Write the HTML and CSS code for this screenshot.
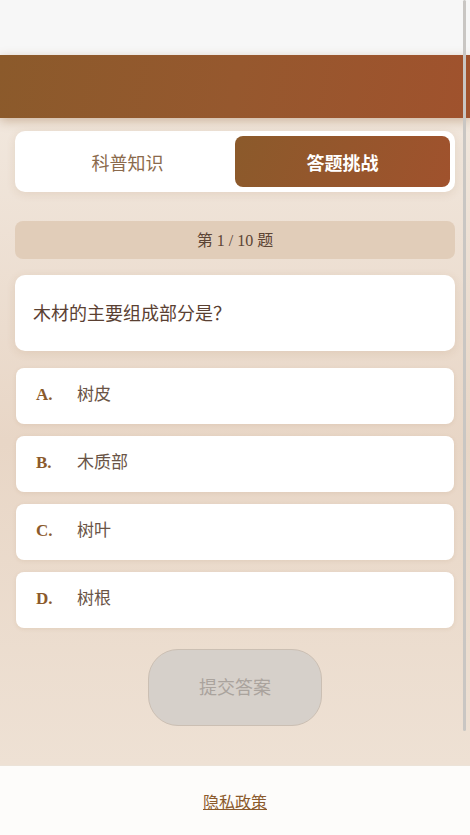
FILE: index.html
```html
<!DOCTYPE html>
<html lang="zh">
<head>
<meta charset="utf-8">
<title>答题挑战</title>
<link rel="stylesheet" href="styles.css">
</head>
<body>
<div class="app">
  <div class="topbar"></div>
  <header class="header"></header>
  <main class="main">
    <nav class="tabs">
      <button class="tab">科普知识</button>
      <button class="tab active">答题挑战</button>
    </nav>
    <div class="counter">第 1 / 10 题</div>
    <section class="question">木材的主要组成部分是？</section>
    <ul class="options">
      <li class="option"><span class="letter">A.</span><span class="text">树皮</span></li>
      <li class="option"><span class="letter">B.</span><span class="text">木质部</span></li>
      <li class="option"><span class="letter">C.</span><span class="text">树叶</span></li>
      <li class="option"><span class="letter">D.</span><span class="text">树根</span></li>
    </ul>
    <div class="submit-wrap"><button class="submit" disabled>提交答案</button></div>
  </main>
  <footer class="footer"><a href="#" class="privacy">隐私政策</a></footer>
  <div class="scroll-thumb"></div>
</div>
</body>
</html>
```
FILE: styles.css
```css
* { box-sizing: border-box; }
html, body { margin: 0; padding: 0; }
body {
  font-family: "Liberation Serif", "Noto Sans CJK SC", serif;
  background: #f7f7f7;
}
.app {
  position: relative;
  width: 470px;
  height: 835px;
  display: flex;
  flex-direction: column;
  overflow: hidden;
}
.topbar {
  height: 55px;
  background: #f7f7f7;
  flex: none;
}
.header {
  height: 63px;
  flex: none;
  background: linear-gradient(100deg, #8b5a2b 0%, #96582e 50%, #a0522d 100%);
  box-shadow: 0 3px 10px rgba(139, 90, 43, 0.35);
  position: relative;
  z-index: 1;
}
.main {
  flex: 1;
  padding: 13px 15px 0 15px;
  background: linear-gradient(180deg, #f1e7dd 0%, #e8d6c6 50%, #eee1d4 100%);
  display: flex;
  flex-direction: column;
}
.tabs {
  display: flex;
  padding: 5px;
  background: #fff;
  border-radius: 10px;
  box-shadow: 0 2px 10px rgba(139, 90, 43, 0.12);
  height: 61px;
}
.tab {
  flex: 1;
  border: none;
  background: transparent;
  font-family: "Liberation Serif", "Noto Sans CJK SC", serif;
  font-size: 18px;
  color: #8b6a4c;
  border-radius: 8px;
  padding: 0;
}
.tab.active {
  background: linear-gradient(110deg, #8b5a2b 0%, #a0522d 100%);
  color: #fff;
  font-weight: bold;
}
.counter {
  margin-top: 29px;
  height: 38px;
  background: #e1cdb9;
  border-radius: 8px;
  display: flex;
  align-items: center;
  justify-content: center;
  font-size: 16px;
  color: #5c4434;
  padding-bottom: 3px;
}
.question {
  margin-top: 16px;
  height: 76px;
  background: #fff;
  border-radius: 10px;
  box-shadow: 0 2px 10px rgba(139, 90, 43, 0.12);
  display: flex;
  align-items: center;
  padding: 0 18px 2px 18px;
  font-size: 18px;
  color: #5a4032;
}
.options {
  list-style: none;
  margin: 17px 1px 0 1px;
  padding: 0;
  display: flex;
  flex-direction: column;
  gap: 12px;
}
.option {
  height: 56px;
  line-height: 54px;
  background: #fff;
  border-radius: 8px;
  box-shadow: 0 1px 4px rgba(139, 90, 43, 0.1);
  padding-left: 20px;
  white-space: nowrap;
}
.letter {
  display: inline-block;
  width: 41px;
  font-weight: bold;
  font-size: 17px;
  color: #8b5a2b;
}
.text {
  font-size: 17px;
  color: #6a5446;
}
.submit-wrap {
  display: flex;
  justify-content: center;
  margin-top: 21px;
}
.submit {
  width: 174px;
  height: 77px;
  border-radius: 30px;
  background: #d6d0ca;
  border: 1px solid #cbbfb3;
  font-family: "Liberation Serif", "Noto Sans CJK SC", serif;
  font-size: 18px;
  color: #aaa39d;
  padding: 0 0 4px 0;
}
.footer {
  height: 70px;
  flex: none;
  background: #fdfcfa;
  border-top: 1px solid #ece3d8;
  display: flex;
  align-items: center;
  justify-content: center;
}
.privacy {
  font-family: "Noto Sans CJK SC", sans-serif;
  font-size: 16px;
  color: #8b5a2b;
  text-decoration: underline;
}
.scroll-thumb {
  position: absolute;
  top: 0;
  left: 463px;
  width: 3px;
  height: 731px;
  border-radius: 2px;
  background: #c9c6c3;
  z-index: 5;
}
```
